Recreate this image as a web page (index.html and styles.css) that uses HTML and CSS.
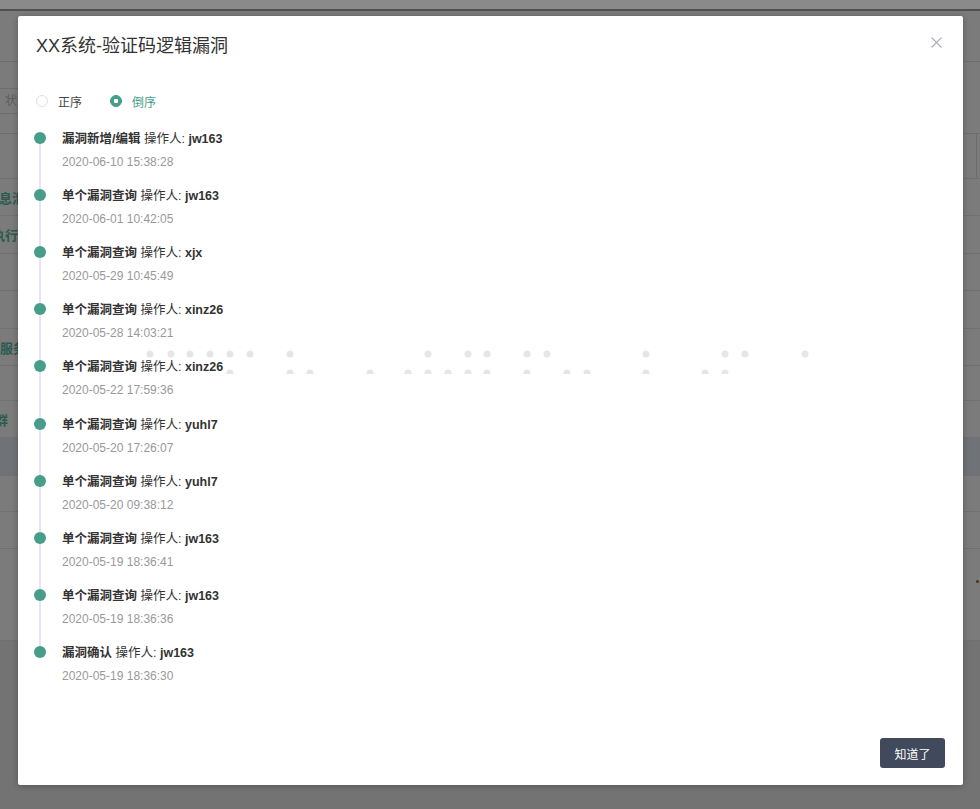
FILE: index.html
```html
<!DOCTYPE html>
<html lang="zh-CN">
<head>
<meta charset="utf-8">
<title>XX系统-验证码逻辑漏洞</title>
<link rel="stylesheet" href="styles.css">
</head>
<body>
<div class="page">
  <div class="topbar"></div>
  <div class="toolbar"></div>
  <div class="filters"><div class="input">状态</div></div>
  <div class="table">
    <div class="row r45"><span class="col-edge"></span></div>
    <div class="row r37"><span class="cell c-a">信息泄露</span></div>
    <div class="row r38"><span class="cell c-b">执行漏洞</span></div>
    <div class="row r37"></div>
    <div class="row r38"></div>
    <div class="row r37"><span class="cell c-c">服务</span></div>
    <div class="row r35"></div>
    <div class="row r37"><span class="cell c-d">群</span></div>
    <div class="row r38 active"></div>
    <div class="row r36"></div>
    <div class="row r37"></div>
    <div class="row r92"><span class="mark"></span></div>
  </div>
</div>

<div class="modal">
  <div class="modal-header">
    <h1 class="modal-title">XX系统-验证码逻辑漏洞</h1>
    <button class="modal-close" aria-label="关闭">
      <svg width="11" height="11" viewBox="0 0 11 11"><path d="M0.5 0.5L10.5 10.5M10.5 0.5L0.5 10.5" stroke="#a9b0bb" stroke-width="1.1" fill="none"/></svg>
    </button>
  </div>
  <div class="modal-body">
    <div class="radios">
      <label class="radio"><span class="radio-circle"></span><span class="radio-text">正序</span></label>
      <label class="radio checked"><span class="radio-circle"></span><span class="radio-text">倒序</span></label>
    </div>
    <ul class="timeline">
      <li class="tl-item"><div class="tl-title"><b>漏洞新增/编辑</b> 操作人: <b>jw163</b></div><div class="tl-time">2020-06-10 15:38:28</div></li>
      <li class="tl-item"><div class="tl-title"><b>单个漏洞查询</b> 操作人: <b>jw163</b></div><div class="tl-time">2020-06-01 10:42:05</div></li>
      <li class="tl-item"><div class="tl-title"><b>单个漏洞查询</b> 操作人: <b>xjx</b></div><div class="tl-time">2020-05-29 10:45:49</div></li>
      <li class="tl-item"><div class="tl-title"><b>单个漏洞查询</b> 操作人: <b>xinz26</b></div><div class="tl-time">2020-05-28 14:03:21</div></li>
      <li class="tl-item"><div class="tl-title"><b>单个漏洞查询</b> 操作人: <b>xinz26</b></div><div class="tl-time">2020-05-22 17:59:36</div></li>
      <li class="tl-item"><div class="tl-title"><b>单个漏洞查询</b> 操作人: <b>yuhl7</b></div><div class="tl-time">2020-05-20 17:26:07</div></li>
      <li class="tl-item"><div class="tl-title"><b>单个漏洞查询</b> 操作人: <b>yuhl7</b></div><div class="tl-time">2020-05-20 09:38:12</div></li>
      <li class="tl-item"><div class="tl-title"><b>单个漏洞查询</b> 操作人: <b>jw163</b></div><div class="tl-time">2020-05-19 18:36:41</div></li>
      <li class="tl-item"><div class="tl-title"><b>单个漏洞查询</b> 操作人: <b>jw163</b></div><div class="tl-time">2020-05-19 18:36:36</div></li>
      <li class="tl-item"><div class="tl-title"><b>漏洞确认</b> 操作人: <b>jw163</b></div><div class="tl-time">2020-05-19 18:36:30</div></li>
    </ul>
  </div>
  <div class="modal-footer">
    <button class="btn-ok">知道了</button>
  </div>
</div>

<svg class="dots" width="680" height="30" viewBox="140 344 680 30">
  <g fill="#e6e6e6">
    <circle cx="150" cy="354" r="3.5"/><circle cx="171" cy="354" r="3.5"/><circle cx="190" cy="354" r="3.5"/><circle cx="210" cy="354" r="3.5"/><circle cx="230" cy="354" r="3.5"/><circle cx="250" cy="354" r="3.5"/><circle cx="290" cy="354" r="3.5"/><circle cx="428" cy="354" r="3.5"/><circle cx="468" cy="354" r="3.5"/><circle cx="487" cy="354" r="3.5"/><circle cx="527" cy="354" r="3.5"/><circle cx="547" cy="354" r="3.5"/><circle cx="646" cy="354" r="3.5"/><circle cx="725" cy="354" r="3.5"/><circle cx="745" cy="354" r="3.5"/><circle cx="805" cy="354" r="3.5"/>
    <circle cx="230" cy="373" r="3.5"/><circle cx="290" cy="373" r="3.5"/><circle cx="310" cy="373" r="3.5"/><circle cx="370" cy="373" r="3.5"/><circle cx="408" cy="373" r="3.5"/><circle cx="428" cy="373" r="3.5"/><circle cx="448" cy="373" r="3.5"/><circle cx="468" cy="373" r="3.5"/><circle cx="487" cy="373" r="3.5"/><circle cx="527" cy="373" r="3.5"/><circle cx="567" cy="373" r="3.5"/><circle cx="587" cy="373" r="3.5"/><circle cx="646" cy="373" r="3.5"/><circle cx="705" cy="373" r="3.5"/><circle cx="725" cy="373" r="3.5"/>
  </g>
</svg>
</body>
</html>
```

FILE: styles.css
```css
* { box-sizing: border-box; }

html, body {
  margin: 0;
  padding: 0;
}

body {
  width: 980px;
  height: 809px;
  overflow: hidden;
  position: relative;
  background: #737373;
  font-family: "Liberation Sans", "Noto Sans CJK SC", sans-serif;
  color: #333;
}

/* ---------- dimmed page behind the dialog ---------- */
.page {
  display: flex;
  flex-direction: column;
}

.topbar {
  height: 11px;
  background: #8a8a8a;
  border-bottom: 2px solid #505050;
}

.toolbar {
  height: 51px;
  background: #7b7b7b;
  border-bottom: 1px solid #6e6e6e;
}

.filters {
  height: 72px;
  background: #7b7b7b;
  border-bottom: 1px solid #6e6e6e;
  padding-top: 26px;
}

.input {
  width: 120px;
  height: 26px;
  margin-left: -20px;
  padding-left: 24px;
  border: 1px solid #6c6c6c;
  border-radius: 2px;
  font-size: 12px;
  line-height: 24px;
  color: #5d5d5d;
}

.table {
  display: flex;
  flex-direction: column;
  background: #7b7b7b;
}

.row {
  display: flex;
  align-items: center;
  border-bottom: 1px solid #707070;
  overflow: hidden;
}

.r35 { height: 35px; }
.r36 { height: 36px; }
.r37 { height: 37px; }
.r38 { height: 38px; }
.r45 { height: 45px; }
.r92 { height: 92px; position: relative; }

.row.active { background: #6f7378; }

.col-edge {
  margin-left: auto;
  width: 4px;
  height: 100%;
  border-left: 1px solid #6c6c6c;
}

.cell {
  white-space: nowrap;
  font-size: 13px;
  font-weight: bold;
  color: #2b5a4f;
}

.c-a { margin-left: -14px; }
.c-b { margin-left: -8px; }
.c-c { margin-left: 0; }
.c-d { margin-left: -5px; }

.mark {
  position: absolute;
  right: 1px;
  top: 31px;
  width: 3px;
  height: 3px;
  border-radius: 50%;
  background: #4a3218;
}

/* ---------- dialog ---------- */
.modal {
  position: absolute;
  left: 18px;
  top: 16px;
  width: 945px;
  height: 769px;
  background: #fff;
  border-radius: 2px;
  box-shadow: 0 1px 6px rgba(0, 0, 0, 0.25);
  display: flex;
  flex-direction: column;
}

.modal-header {
  padding: 18px 18px 0;
}

.modal-title {
  margin: 0;
  font-size: 18px;
  line-height: 24px;
  font-weight: normal;
  color: #333;
}

.modal-close {
  position: absolute;
  top: 21px;
  right: 21px;
  width: 11px;
  height: 11px;
  padding: 0;
  border: 0;
  background: none;
  display: block;
}

.modal-close svg { display: block; }

.modal-body {
  flex: 1;
}

.radios {
  margin-top: 35px;
  padding-left: 18px;
  display: flex;
  align-items: center;
  height: 20px;
}

.radio {
  display: flex;
  align-items: center;
  margin-right: 28px;
}

.radio-circle {
  width: 12px;
  height: 12px;
  border-radius: 50%;
  border: 1px solid #dcdfe6;
  background: #fff;
  margin-right: 10px;
  margin-bottom: 5px;
  display: flex;
  align-items: center;
  justify-content: center;
}

.radio-text {
  font-size: 12px;
  line-height: 20px;
  color: #444;
}

.radio.checked .radio-circle {
  background: #479d89;
  border-color: #479d89;
}

.radio.checked .radio-circle::after {
  content: "";
  width: 4px;
  height: 4px;
  border-radius: 1px;
  background: #fff;
}

.radio.checked .radio-text { color: #479d89; }

/* ---------- timeline ---------- */
.timeline {
  list-style: none;
  margin: 16px 0 0;
  padding: 0 0 0 44px;
}

.tl-item {
  position: relative;
  padding-bottom: 15.12px;
}

.tl-item::before {
  content: "";
  position: absolute;
  left: -28px;
  top: 3px;
  width: 12px;
  height: 12px;
  border-radius: 50%;
  background: #479d89;
  z-index: 1;
}

.tl-item::after {
  content: "";
  position: absolute;
  left: -23px;
  top: 9px;
  bottom: -9px;
  width: 2px;
  background: #e4e7ed;
}

.tl-item:last-child::after { display: none; }

.tl-title {
  font-size: 12.5px;
  line-height: 20px;
  color: #333;
}

.tl-title b { font-weight: bold; }

.tl-time {
  margin-top: 4px;
  font-size: 12px;
  line-height: 18px;
  color: #999;
}

/* ---------- footer ---------- */
.modal-footer {
  display: flex;
  justify-content: flex-end;
  padding: 0 18px 17px;
}

.btn-ok {
  width: 65px;
  height: 30px;
  border: 0;
  border-radius: 3px;
  background: #414a5c;
  color: #fff;
  font-family: "Liberation Sans", "Noto Sans CJK SC", sans-serif;
  font-size: 12px;
  padding: 0;
}

/* decorative dots drawn above the dialog */
.dots {
  position: absolute;
  left: 140px;
  top: 344px;
  pointer-events: none;
}
```
